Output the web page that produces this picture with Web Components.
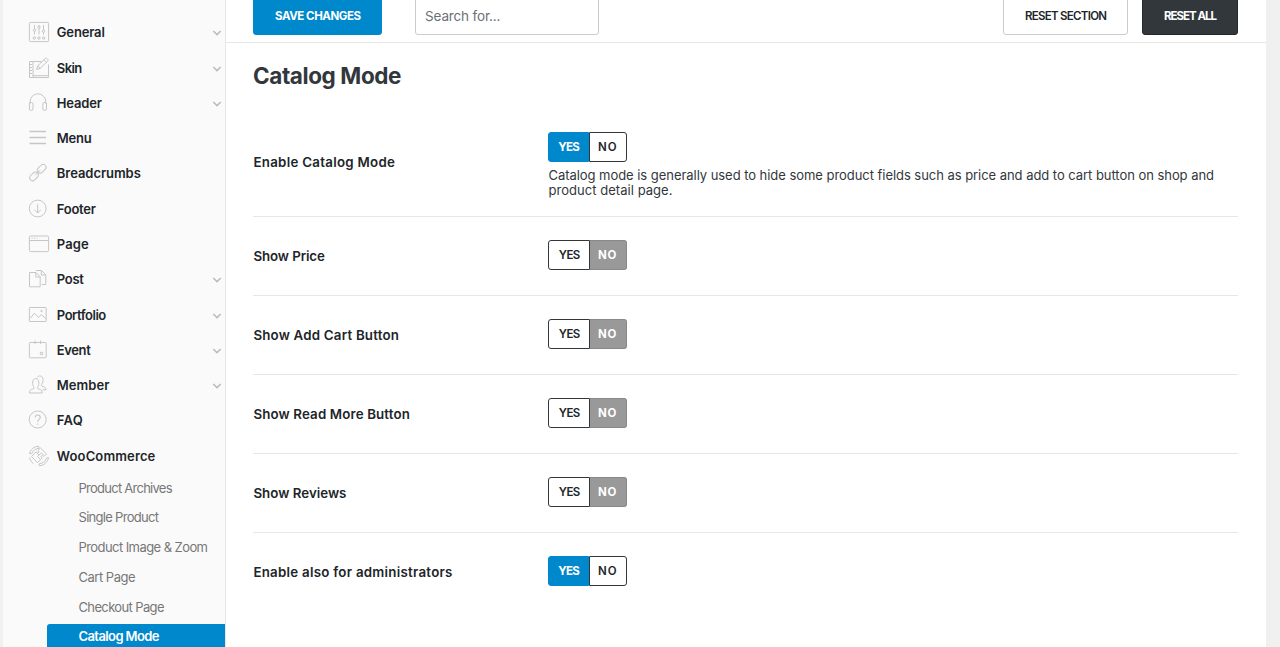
<!DOCTYPE html>
<html lang="en">
<head>
<meta charset="utf-8">
<title>Theme Options</title>
<style>
html,body{margin:0;height:647px;overflow:hidden;background:#f0f0f0}
body{font-family:Inter,"Open Sans",sans-serif;font-size:13px;color:#212529}
</style>
</head>
<body>
<options-page></options-page>
<script>
const fits = [];
function define(name, html, setup) {
  const tpl = document.createElement('template');
  tpl.innerHTML = html;
  customElements.define(name, class extends HTMLElement {
    constructor() {
      super();
      this.attachShadow({mode: 'open'}).append(tpl.content.cloneNode(true));
    }
    connectedCallback() { if (setup) setup(this, this.shadowRoot); }
  });
}

// Single line of text tracked to fill a given width.
define('fit-text', `<style>:host{display:inline-block;white-space:nowrap}</style><slot></slot>`, el => fits.push(el));

const icons = {
  general: '<rect x="1.4" y="1.4" width="19.2" height="19.2" rx="1"/><path d="M6.5 4v4M6.5 10.500v3M11 4v1M11 7.500v6M15.500 4v5M15.500 11.500v2"/><circle cx="6.500" cy="9.200" r="1.200"/><circle cx="11" cy="6.200" r="1.200"/><circle cx="15.500" cy="10.200" r="1.200"/><circle cx="6.300" cy="17" r="1.200"/><circle cx="11" cy="17" r="1.200"/><circle cx="15.700" cy="17" r="1.200"/>',
  skin: '<path d="M13.500 4.500H1.500V20.500H20.500V7.500M5 4.500v16M2 7.500H4M2 10.500H4M2 13.500H4M2 16.500H4M5 18.700H20"/><path d="M8.500 12.500L9.800 8.800L17.400 1.300Q18 .8 18.700 1.400L19.900 2.600Q20.500 3.300 19.900 3.900L12.300 11.300ZM9.800 8.800l2.500 2.500M16 2.800l2.500 2.500"/>',
  header: '<path d="M2 12V10a7.750 8 0 0 1 15.900 0v2"/><rect x="1.400" y="10.500" width="3.600" height="7.800" rx="1.300"/><rect x="14.900" y="10.500" width="3.600" height="7.800" rx="1.300"/>',
  menu: '<path d="M1.500 4.500h16.500M1.500 10.500h16.500M1.500 16.500h16.500" stroke-width="1.300"/>',
  breadcrumbs: '<rect x="-4.900" y="-2.900" width="9.800" height="5.800" rx="2.900" transform="translate(13.700 6.700) rotate(-45)"/><rect x="-4.900" y="-2.900" width="9.800" height="5.800" rx="2.900" transform="translate(6 14.400) rotate(-45)"/><path d="M7.300 13.200L12.400 8"/>',
  footer: '<circle cx="9.700" cy="10.500" r="8.400"/><path d="M9.700 6v9M6.500 11.800l3.200 3.200l3.200-3.200"/>',
  page: '<rect x="1.400" y="3" width="19.200" height="15.600" rx="1.200"/><path d="M1.500 7.500h19M3.500 5.300h1M6 5.300h1M8.500 5.300h1"/>',
  post: '<path d="M1.500 4.500H8L12.200 8.800V18.800H1.500ZM7.800 4.500V9H12M8 2.500H13.500L17.800 6.800V16.500H13.800M13.300 2.500V7h4.300"/>',
  portfolio: '<rect x="1.400" y="3.500" width="16.800" height="14" rx=".6"/><path d="M2 14.500L6.300 9.300L10.500 13.300L13.300 10.600L18 14.800"/><circle cx="13.500" cy="7" r=".7"/>',
  event: '<rect x="1.400" y="3.500" width="16.800" height="15.300" rx=".8"/><path d="M7 1.500v3.500M12.600 1.500v3.500"/><rect x="12.300" y="13.300" width="2.400" height="2.400" stroke-width=".8"/>',
  member: '<path d="M1.400 19c0-3.500 2-3.300 4.200-4.300c.8-.5.400-1.600-.1-2.200C4.300 11 3.800 4.500 7.700 4.500S11.300 11 10 12.500c-.5.600-.8 1.700 0 2.200c2.200 1 4.200.8 4.200 4.300Z"/><path d="M9.300 3.200C10.200 1.500 14.500 1 15 5c.2 2.500-.3 4-1.300 5.200c-.5.700-.5 1.600.3 2c2 .9 4 .9 4 3.600H14.500"/>',
  faq: '<circle cx="9.700" cy="10.500" r="8.500"/><path d="M7.200 8.500c0-3.400 5-3.200 5 0c0 1.900-2.500 2-2.500 4.400M9.700 14.500v1.300" stroke-width="1.200"/>',
  woo: '<path d="M1.500 8.500C2.500 4.500 6 1.300 10.800 1.300V3.300C7.500 3.500 5 5.500 3.600 8.800ZM20.500 12.500C19.800 17 16 20.600 11.200 20.800V18.800C14.800 18.500 17.300 16.500 18.500 13ZM1.500 12.500C2 15 3.500 17.300 5.500 18.800"/><path d="M3.500 11.500L8 7L9.700 8.200L11 7L10 5.300L12.500 3L18.500 8.800L15.800 11.500L14.200 10.300L13 11.500L14 13.200L9.500 17.700ZM8 7L11 10L9.500 11.500L12 14M11 10L13.500 8L15.500 10"/>'
};

define('nav-item', `<style>
:host{display:flex;align-items:center;height:35.27px;padding:0 3px 0 25px;font-weight:600;box-sizing:border-box}
svg{flex:none;fill:none;stroke:#c6c6c6;stroke-width:1}
.icon{width:22px;height:22px;margin-right:6.800px}
.text{flex:1;line-height:20px}
.chev{width:10px;height:6px;margin-top:2px;stroke:#bbb;stroke-width:1.500;display:none}
:host([open-arrow]) .chev{display:block}
</style><svg class="icon" viewBox="0 0 22 22"></svg><span class="text"><slot></slot></span><svg class="chev" viewBox="0 0 10 6"><path d="M1.300 1L5 4.600L8.700 1"/></svg>`,
(el, root) => root.querySelector('.icon').innerHTML = icons[el.getAttribute('icon')]);

define('sub-item', `<style>
:host{display:flex;align-items:center;height:29.7px;margin-left:44px;padding-left:31.500px;color:#777;border-radius:3px 0 0 3px;flex:none}
:host([active]){background:#0088cc;color:#fff;font-weight:600;height:25px;margin-top:2.400px}
</style><slot></slot>`);

const nav = [['general','General',48.5,1],['skin','Skin',26,1],['header','Header',45.5,1],['menu','Menu',35.5,0],['breadcrumbs','Breadcrumbs',84.5,0],['footer','Footer',39.5,0],['page','Page',32.5,0],['post','Post',27.5,1],['portfolio','Portfolio',50,1],['event','Event',34.5,1],['member','Member',53,1],['faq','FAQ',26.5,0],['woo','WooCommerce',99,0]];
const sub = [['Product Archives',94],['Single Product',80.5],['Product Image &amp; Zoom',129.5],['Cart Page',57],['Checkout Page',86],['Catalog Mode',81]];
define('side-nav', `<style>
:host{display:flex;flex-direction:column;width:222px;background:#fafafa;border-right:1px solid #e7e7e7;padding-top:14.800px;box-sizing:content-box;overflow:hidden}
nav{display:flex;flex-direction:column;flex:none}
sub-item:first-of-type{margin-top:-.3px}
</style><nav>${nav.map(n => `<nav-item icon="${n[0]}" ${n[3] ? 'open-arrow' : ''}><fit-text w="${n[2] - .5}">${n[1]}</fit-text></nav-item>`).join('')}
${sub.map((s, i) => `<sub-item ${i == 5 ? 'active' : ''}><fit-text w="${s[1]}">${s[0]}</fit-text></sub-item>`).join('')}</nav>`);

define('action-button', `<style>
:host{display:flex;justify-content:center;align-items:center;height:38px;box-sizing:border-box;border:1px solid #ccc;border-radius:0 0 3px 3px;font-size:11.500px;font-weight:600;color:#212529;background:#fff;padding-left:1px}
:host([kind=primary]){background:#0088cc;border-color:#0088cc;color:#fff;font-weight:700}
:host([kind=dark]){background:#32373c;border-color:#23282d;color:#fff;font-weight:700}
</style><slot></slot>`);

define('search-box', `<style>
:host{display:flex;align-items:center;height:38px;width:184px;box-sizing:border-box;border:1px solid #ccc;border-radius:0 0 3px 3px;padding-left:9px;color:#6c7075;font-size:13.500px;background:#fff}
</style><slot></slot>`);

define('top-bar', `<style>
:host{display:flex;align-items:flex-end;height:42px;box-sizing:content-box;border-bottom:1px solid #e7e7e7;padding:0 28px 0 27px}
div{display:flex;width:100%;padding-bottom:7px}
.save{width:129px;margin-right:33px}.section{width:125px;margin-left:auto;margin-right:14px}.all{width:96px}
</style><div><action-button class="save" kind="primary"><fit-text w="86">SAVE CHANGES</fit-text></action-button>
<search-box><fit-text w="75.5">Search for...</fit-text></search-box>
<action-button class="section"><fit-text w="82">RESET SECTION</fit-text></action-button>
<action-button class="all" kind="dark"><fit-text w="53">RESET ALL</fit-text></action-button></div>`);

define('yes-no', `<style>
:host{display:flex;width:79px;height:30px;font-size:11.500px;font-weight:600}
span{box-sizing:border-box;display:flex;align-items:center;justify-content:center;border:1px solid #32373c;background:#fff;color:#212529}
.y{width:42px;border-radius:3px 0 0 3px;padding-left:1px}.n{width:37px;border-left:0;border-radius:0 3px 3px 0;padding-right:1.500px}
:host([value=yes]) .y{background:#0088cc;border-color:#0088cc;color:#fff;font-weight:700;width:41px}
:host([value=yes]) .n{border-left:1px solid #32373c;width:38px}
:host([value=no]) .n{background:#999;border-color:#888;color:#fff;font-weight:700}
</style><span class="y"><fit-text w="21.5">YES</fit-text></span><span class="n"><fit-text w="18.5">NO</fit-text></span>`);

define('option-row', `<style>
:host{display:grid;grid-template-columns:295px 1fr;height:79px;box-sizing:border-box;border-bottom:1px solid #e7e7e7;align-items:center;padding-bottom:2px}
:host([tall]){height:105px;align-items:start}
:host([last]){border-bottom-color:transparent}
.label{font-size:13.300px;line-height:16px;font-weight:600;padding:1px 0 0 .4px}
:host([tall]) .label{padding-top:42px}
:host([tall]) .field{padding-top:20px}
.desc{display:flex;flex-direction:column;align-items:flex-start;line-height:15px;color:#32373c;padding:6px 0 0 .5px}
.desc:empty{display:none}
</style><div class="label"><slot name="label"></slot></div><div class="field"><slot></slot><div class="desc"></div></div>`,
(el, root) => { if (el.hasAttribute('tall')) root.querySelector('.desc').innerHTML = '<slot name="desc"></slot>'; });

const rows = [['Show Price',71.5],['Show Add Cart Button',145.5],['Show Read More Button',156.5],['Show Reviews',93]];
define('options-panel', `<style>
:host{display:block;padding:20px 28px 0 27px}
h1{margin:0 0 23px;font-size:22.500px;line-height:26px;font-weight:700;color:#32373c}
</style><h1><fit-text w="148.5">Catalog Mode</fit-text></h1>
<div><option-row tall><fit-text slot="label" w="141.5">Enable Catalog Mode</fit-text><yes-no value="yes"></yes-no>
<fit-text slot="desc" w="665.5">Catalog mode is generally used to hide some product fields such as price and add to cart button on shop and</fit-text><fit-text slot="desc" w="124">product detail page.</fit-text></option-row>
${rows.map(r => `<option-row><fit-text slot="label" w="${r[1]}">${r[0]}</fit-text><yes-no value="no"></yes-no></option-row>`).join('')}
<option-row last><fit-text slot="label" w="199">Enable also for administrators</fit-text><yes-no value="yes"></yes-no></option-row></div>`);

define('options-page', `<style>
:host{display:grid;grid-template-columns:223px 1fr;height:647px;margin:0 14px 0 3px;background:#fff;overflow:hidden}
main{min-width:0}
side-nav{min-height:0}
</style><side-nav></side-nav><main><top-bar></top-bar><options-panel></options-panel></main>`);

for (const el of fits) {
  const w = +el.getAttribute('w');
  const natural = el.getBoundingClientRect().width;
  const sp = (w - natural) / (el.textContent.length - 1);
  el.style.letterSpacing = sp + 'px';
  el.style.marginRight = -sp + 'px';
}
</script>
</body>
</html>
